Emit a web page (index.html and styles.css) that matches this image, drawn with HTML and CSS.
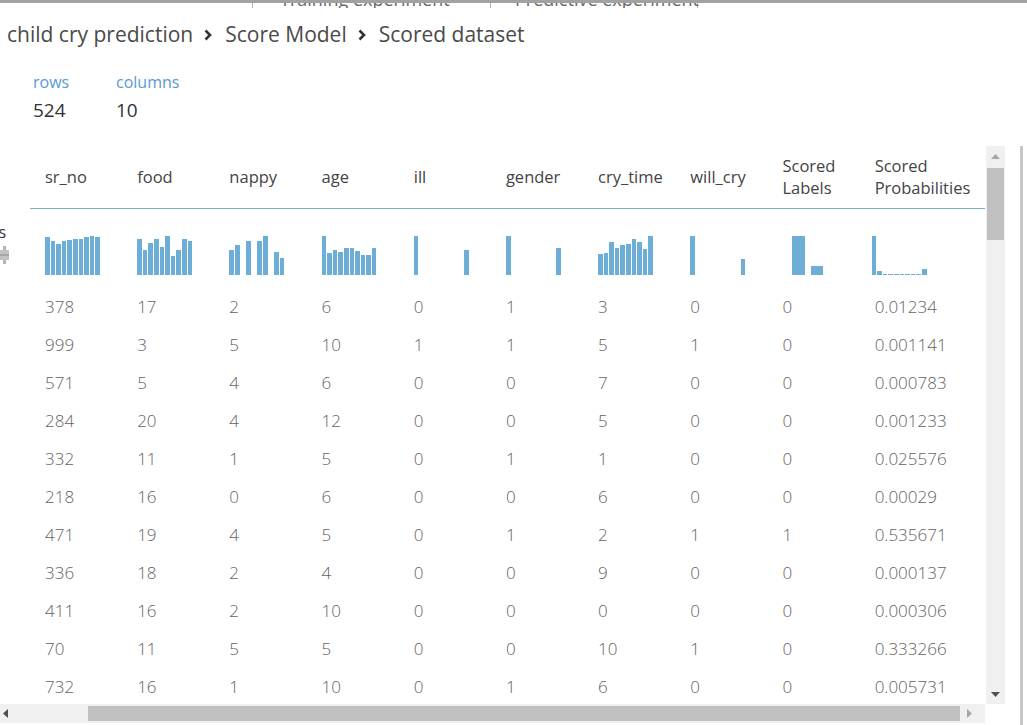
FILE: index.html
```html
<!DOCTYPE html>
<html>
<head>
<meta charset="utf-8">
<title>Scored dataset</title>
<link rel="stylesheet" href="styles.css">
</head>
<body>
<div class="page">
  <div class="tabs">
    <div class="tab tab-first"><span>Training experiment</span></div>
    <div class="tab"><span>Predictive experiment</span></div>
  </div>

  <div class="crumbs">
    <span>child cry prediction</span>
    <svg class="chev" width="8" height="12" viewBox="0 0 8 12"><path d="M1.5 1.5 L6 6 L1.5 10.5" fill="none" stroke="#333" stroke-width="2.6"/></svg>
    <span>Score Model</span>
    <svg class="chev" width="8" height="12" viewBox="0 0 8 12"><path d="M1.5 1.5 L6 6 L1.5 10.5" fill="none" stroke="#333" stroke-width="2.6"/></svg>
    <span>Scored dataset</span>
  </div>

  <div class="stats">
    <div class="stat stat-rows"><div class="stat-label">rows</div><div class="stat-value">524</div></div>
    <div class="stat"><div class="stat-label">columns</div><div class="stat-value">10</div></div>
  </div>

  <div class="main">
    <div class="viewer">
      <div class="grid-row">
        <div class="gutter">
          <div class="gutter-text"><span>Outputs</span></div>
          <svg class="gutter-icon" width="9" height="18" viewBox="0 0 9 18"><rect x="3" y="0" width="3" height="18" fill="#b5b5b5"/><rect x="0" y="4" width="9" height="10" fill="#c2c2c2"/><rect x="0" y="8" width="9" height="2" fill="#a8a8a8"/></svg>
        </div>
        <div class="table">
          <div class="thead cols">
            <div>sr_no</div><div>food</div><div>nappy</div><div>age</div><div>ill</div><div>gender</div><div>cry_time</div><div>will_cry</div><div>Scored<br>Labels</div><div>Scored<br>Probabilities</div>
          </div>
          <div class="hists cols">
            <div class="hist">
              <i style="height:38px"></i><i style="height:34px"></i><i style="height:31px"></i><i style="height:34px"></i><i style="height:35px"></i><i style="height:36px"></i><i style="height:36px"></i><i style="height:38px"></i><i style="height:39px"></i><i style="height:38px"></i>
            </div>
            <div class="hist">
              <i style="height:36px"></i><i style="height:25px"></i><i style="height:32px"></i><i style="height:36px"></i><i style="height:28px"></i><i style="height:39px"></i><i style="height:19px"></i><i style="height:25px"></i><i style="height:36px"></i><i style="height:34px"></i>
            </div>
            <div class="hist">
              <i style="height:25px"></i><i style="height:30px"></i><i style="height:0"></i><i style="height:34px"></i><i style="height:0"></i><i style="height:34px"></i><i style="height:39px"></i><i style="height:0"></i><i style="height:23px"></i><i style="height:17px"></i>
            </div>
            <div class="hist">
              <i style="height:39px"></i><i style="height:22px"></i><i style="height:25px"></i><i style="height:23px"></i><i style="height:27px"></i><i style="height:27px"></i><i style="height:24px"></i><i style="height:20px"></i><i style="height:20px"></i><i style="height:27px"></i>
            </div>
            <div class="hist">
              <i style="height:39px"></i><i style="height:0"></i><i style="height:0"></i><i style="height:0"></i><i style="height:0"></i><i style="height:0"></i><i style="height:0"></i><i style="height:0"></i><i style="height:0"></i><i style="height:25px"></i>
            </div>
            <div class="hist">
              <i style="height:39px"></i><i style="height:0"></i><i style="height:0"></i><i style="height:0"></i><i style="height:0"></i><i style="height:0"></i><i style="height:0"></i><i style="height:0"></i><i style="height:0"></i><i style="height:27px"></i>
            </div>
            <div class="hist">
              <i style="height:21px"></i><i style="height:22px"></i><i style="height:33px"></i><i style="height:27px"></i><i style="height:30px"></i><i style="height:31px"></i><i style="height:36px"></i><i style="height:33px"></i><i style="height:26px"></i><i style="height:39px"></i>
            </div>
            <div class="hist">
              <i style="height:39px"></i><i style="height:0"></i><i style="height:0"></i><i style="height:0"></i><i style="height:0"></i><i style="height:0"></i><i style="height:0"></i><i style="height:0"></i><i style="height:0"></i><i style="height:16px"></i>
            </div>
            <div class="hist hist-two">
              <i style="height:39px"></i><i style="height:9px"></i>
            </div>
            <div class="hist hist-prob">
              <i style="height:39px"></i><i style="height:4px"></i><i style="height:1px"></i><i style="height:1px"></i><i style="height:1px"></i><i style="height:1px"></i><i style="height:1px"></i><i style="height:1px"></i><i style="height:1px"></i><i style="height:6px"></i>
            </div>
          </div>
          <div class="row cols"><div>378</div><div>17</div><div>2</div><div>6</div><div>0</div><div>1</div><div>3</div><div>0</div><div>0</div><div>0.01234</div></div>
          <div class="row cols"><div>999</div><div>3</div><div>5</div><div>10</div><div>1</div><div>1</div><div>5</div><div>1</div><div>0</div><div>0.001141</div></div>
          <div class="row cols"><div>571</div><div>5</div><div>4</div><div>6</div><div>0</div><div>0</div><div>7</div><div>0</div><div>0</div><div>0.000783</div></div>
          <div class="row cols"><div>284</div><div>20</div><div>4</div><div>12</div><div>0</div><div>0</div><div>5</div><div>0</div><div>0</div><div>0.001233</div></div>
          <div class="row cols"><div>332</div><div>11</div><div>1</div><div>5</div><div>0</div><div>1</div><div>1</div><div>0</div><div>0</div><div>0.025576</div></div>
          <div class="row cols"><div>218</div><div>16</div><div>0</div><div>6</div><div>0</div><div>0</div><div>6</div><div>0</div><div>0</div><div>0.00029</div></div>
          <div class="row cols"><div>471</div><div>19</div><div>4</div><div>5</div><div>0</div><div>1</div><div>2</div><div>1</div><div>1</div><div>0.535671</div></div>
          <div class="row cols"><div>336</div><div>18</div><div>2</div><div>4</div><div>0</div><div>0</div><div>9</div><div>0</div><div>0</div><div>0.000137</div></div>
          <div class="row cols"><div>411</div><div>16</div><div>2</div><div>10</div><div>0</div><div>0</div><div>0</div><div>0</div><div>0</div><div>0.000306</div></div>
          <div class="row cols"><div>70</div><div>11</div><div>5</div><div>5</div><div>0</div><div>0</div><div>10</div><div>1</div><div>0</div><div>0.333266</div></div>
          <div class="row cols"><div>732</div><div>16</div><div>1</div><div>10</div><div>0</div><div>1</div><div>6</div><div>0</div><div>0</div><div>0.005731</div></div>
        </div>
        <div class="vscroll">
          <div class="sb-btn"><svg width="9" height="5" viewBox="0 0 9 5"><path d="M0 5 L4.5 0 L9 5 Z" fill="#a6a6a6"/></svg></div>
          <div class="vthumb"></div>
          <div class="sb-fill"></div>
          <div class="sb-btn"><svg width="9" height="5" viewBox="0 0 9 5"><path d="M0 0 L9 0 L4.5 5 Z" fill="#505050"/></svg></div>
        </div>
      </div>
      <div class="hscroll">
        <div class="sb-hbtn"><svg width="5" height="9" viewBox="0 0 5 9"><path d="M5 0 L5 9 L0 4.5 Z" fill="#505050"/></svg></div>
        <div class="hspace"></div>
        <div class="hthumb"></div>
        <div class="sb-hbtn"><svg width="5" height="9" viewBox="0 0 5 9"><path d="M0 0 L5 4.5 L0 9 Z" fill="#a6a6a6"/></svg></div>
      </div>
    </div>
    <div class="edge"></div>
  </div>
</div>
</body>
</html>
```

FILE: styles.css
```css
* { box-sizing: border-box; }
html, body { margin: 0; padding: 0; background: #fff; }
body {
  font-family: "Open Sans", "Noto Sans", "Liberation Sans", sans-serif;
  color: #444;
  width: 1027px;
  height: 725px;
  overflow: hidden;
}
.page { display: flex; flex-direction: column; height: 725px; }

.tabs {
  height: 8px;
  border-top: 3px solid #a2a2a2;
  display: flex;
  overflow: hidden;
  padding-left: 252px;
}
.tab {
  width: 238px;
  border-left: 1px solid #b0b0b0;
  font-size: 18px;
  color: #666;
  line-height: 18px;
  padding-left: 27px;
}
.tab span { display: block; margin-top: -13px; white-space: nowrap; }
.tab + .tab { width: 208px; border-right: 1px solid #b0b0b0; padding-left: 24px; }

.crumbs {
  display: flex;
  align-items: center;
  height: 52px;
  padding: 0 0 0 7px;
  font-size: 21px;
  color: #4a4a4a;
  white-space: nowrap;
}
.chev { margin: 2px 13px 0 11px; }

.stats { display: flex; padding-left: 33px; height: 86px; padding-top: 10px; }
.stat-rows { width: 83px; }
.stat-label { font-size: 16px; color: #5a9ad0; line-height: 24px; }
.stat-value { font-size: 19px; color: #333; line-height: 32px; }

.main { display: flex; flex: 1; min-height: 0; }
.viewer { width: 1005px; display: flex; flex-direction: column; }
.edge { width: 3px; margin-left: 15px; background: #c6c6c6; }

.grid-row { display: flex; height: 558px; }
.gutter { width: 30px; padding-top: 76px; }
.gutter-text { width: 6px; overflow: hidden; display: flex; justify-content: flex-end; font-size: 16px; color: #333; line-height: 20px; white-space: nowrap; }
.gutter-icon { display: block; margin-top: 4px; }

.table { width: 956px; overflow: hidden; }
.cols { display: grid; grid-template-columns: repeat(9, 92.2px) 120px; padding-left: 15px; }
.thead {
  height: 63px;
  align-items: center;
  border-bottom: 1px solid #7fb0c9;
  font-size: 16.5px;
  line-height: 22px;
  color: #444;
}
.hists { height: 79px; align-items: end; padding-bottom: 13px; }
.hist { display: flex; align-items: flex-end; gap: 1px; height: 39px; }
.hist i { display: block; width: 4.6px; background: #6daed6; }
.hist-two { gap: 6px; padding-left: 10px; }
.hist-two i { width: 12.5px; }
.hist-prob { margin-left: -3px; }

.row { height: 38px; align-items: center; font-size: 17px; color: #636363; font-weight: 300; padding-bottom: 1px; }

.vscroll { width: 19px; margin-left: 1px; background: #f0f0f0; display: flex; flex-direction: column; align-items: center; }
.sb-btn { height: 20px; width: 19px; display: flex; align-items: center; justify-content: center; }
.vthumb { width: 17px; height: 72px; margin-top: 2px; background: #c1c1c1; }
.sb-fill { flex: 1; }

.hscroll { width: 985px; height: 19px; background: #f0f0f0; display: flex; align-items: center; }
.sb-hbtn { width: 18px; height: 19px; display: flex; align-items: center; justify-content: center; }
.sb-hbtn:first-child { width: 10px; justify-content: flex-start; padding-left: 3px; }
.hspace { width: 78px; }
.hthumb { width: 872px; height: 15px; background: #c1c1c1; }
```
